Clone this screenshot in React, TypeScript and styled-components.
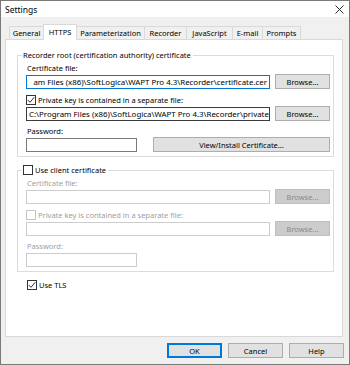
import styled, { createGlobalStyle } from "styled-components";

const GlobalStyle = createGlobalStyle`
  html, body {
    margin: 0;
    padding: 0;
    background: #ffffff;
  }
  body {
    font-family: "Noto Sans", "Open Sans", sans-serif;
    font-size: 7.5px;
    color: #000000;
  }
  * {
    box-sizing: border-box;
  }
`;

const tabs = [
  { label: "General", width: 35 },
  { label: "HTTPS", width: 34, active: true },
  { label: "Parameterization", width: 69 },
  { label: "Recorder", width: 43 },
  { label: "JavaScript", width: 47 },
  { label: "E-mail", width: 31 },
  { label: "Prompts", width: 39 },
];

function Check({ checked, disabled }: { checked?: boolean; disabled?: boolean }) {
  return (
    <CheckBox $disabled={disabled}>
      {checked && (
        <svg width="8" height="8" viewBox="0 0 8 8">
          <polyline points="0.8,4 3,6.3 7.3,1.2" fill="none" stroke="#333" strokeWidth="1" />
        </svg>
      )}
    </CheckBox>
  );
}

function App() {
  return (
    <Window>
      <GlobalStyle />
      <TitleBar>
        <Title>Settings</Title>
        <svg width="9" height="9" viewBox="0 0 9 9">
          <path d="M0.5 0.5 L8.5 8.5 M8.5 0.5 L0.5 8.5" stroke="#111" strokeWidth="0.9" />
        </svg>
      </TitleBar>
      <Body>
        <TabRow>
          {tabs.map((t) => (
            <Tab key={t.label} $width={t.width} $active={t.active}>
              {t.label}
            </Tab>
          ))}
        </TabRow>
        <Panel>
          <Group>
            <Legend>Recorder root (certification authority) certificate</Legend>
            <Label>Certificate file:</Label>
            <FieldRow>
              <TextField $border="#0078d7" $alignEnd>
                <span>am Files (x86)\SoftLogica\WAPT Pro 4.3\Recorder\certificate.cer</span>
              </TextField>
              <Button $width={55}>Browse...</Button>
            </FieldRow>
            <CheckRow>
              <Check checked />
              <span>Private key is contained in a separate file:</span>
            </CheckRow>
            <FieldRow>
              <TextField $border="#3c3c3c">
                <span>C:\Program Files (x86)\SoftLogica\WAPT Pro 4.3\Recorder\private</span>
              </TextField>
              <Button $width={55}>Browse...</Button>
            </FieldRow>
            <Label $gap={5}>Password:</Label>
            <FieldRow>
              <TextField $border="#7a7a7a" $width={111} />
              <Spacer />
              <Button $width={177}>View/Install Certificate...</Button>
            </FieldRow>
          </Group>

          <Group $top={7}>
            <Legend>
              <CheckRow as="span">
                <Check />
                <span>Use client certificate</span>
              </CheckRow>
            </Legend>
            <Label $disabled>Certificate file:</Label>
            <FieldRow>
              <TextField $border="#cccccc" />
              <Button $width={55} disabled>
                Browse...
              </Button>
            </FieldRow>
            <CheckRow $disabled>
              <Check disabled />
              <span>Private key is contained in a separate file:</span>
            </CheckRow>
            <FieldRow>
              <TextField $border="#cccccc" />
              <Button $width={55} disabled>
                Browse...
              </Button>
            </FieldRow>
            <Label $gap={5} $disabled>
              Password:
            </Label>
            <FieldRow>
              <TextField $border="#cccccc" $width={111} />
            </FieldRow>
          </Group>

          <TlsRow>
            <Check checked />
            <span>Use TLS</span>
          </TlsRow>
        </Panel>
        <ButtonBar>
          <Button $width={55} $default>
            OK
          </Button>
          <Button $width={55}>Cancel</Button>
          <Button $width={55}>Help</Button>
        </ButtonBar>
      </Body>
    </Window>
  );
}

export default App;

const Window = styled.div`
  width: 350px;
  height: 365px;
  border: 1px solid #7a7a7a;
  display: flex;
  flex-direction: column;
  background: #f0f0f0;
`;

const TitleBar = styled.div`
  height: 16px;
  background: #ffffff;
  display: flex;
  align-items: center;
  justify-content: space-between;
  padding: 0 5px 0 4px;
`;

const Title = styled.span`
  font-size: 8.5px;
`;

const Body = styled.div`
  flex: 1;
  padding: 7px 0 0 4px;
  display: flex;
  flex-direction: column;
`;

const TabRow = styled.div`
  display: flex;
  align-items: flex-end;
  height: 16px;
  padding-left: 4px;
  margin-bottom: -1px;
  position: relative;
  z-index: 1;
`;

const Tab = styled.div<{ $width: number; $active?: boolean }>`
  width: ${(p) => p.$width}px;
  height: ${(p) => (p.$active ? 16 : 14)}px;
  margin-left: -1px;
  border: 1px solid #d9d9d9;
  border-bottom: ${(p) => (p.$active ? "none" : "1px solid #d9d9d9")};
  background: ${(p) => (p.$active ? "#ffffff" : "#f0f0f0")};
  display: flex;
  align-items: center;
  justify-content: center;
  white-space: nowrap;
  padding-bottom: ${(p) => (p.$active ? 2 : 0)}px;
  &:first-child {
    margin-left: 0;
  }
`;

const Panel = styled.div`
  width: 338px;
  height: 298px;
  background: #ffffff;
  border: 1px solid #d9d9d9;
  padding: 9px 8px 0 11px;
  display: flex;
  flex-direction: column;
`;

const Group = styled.fieldset<{ $top?: number }>`
  margin: ${(p) => p.$top ?? 0}px 0 0 0;
  border: 1px solid #dcdcdc;
  padding: 2px 3px 4px 8px;
  min-width: 0;
`;

const Legend = styled.legend`
  height: 12px;
  line-height: 12px;
  padding: 0 2px 0 1px;
  margin-left: -4px;
  white-space: nowrap;
`;

const Label = styled.div<{ $gap?: number; $disabled?: boolean }>`
  height: 10px;
  line-height: 10px;
  margin-top: ${(p) => p.$gap ?? 0}px;
  padding-left: 1px;
  color: ${(p) => (p.$disabled ? "#a0a0a0" : "#000000")};
`;

const FieldRow = styled.div`
  display: flex;
  align-items: flex-start;
  gap: 5px;
  height: 15px;
  margin-top: 1px;
`;

const TextField = styled.div<{ $border: string; $width?: number; $alignEnd?: boolean }>`
  ${(p) => (p.$width ? `width: ${p.$width}px;` : "flex: 1;")}
  height: 14px;
  margin-top: 1px;
  border: 1px solid ${(p) => p.$border};
  background: #ffffff;
  display: flex;
  align-items: center;
  justify-content: ${(p) => (p.$alignEnd ? "flex-end" : "flex-start")};
  overflow: hidden;
  white-space: nowrap;
  padding: 0 2px;
  font-size: 7.9px;
`;

const Spacer = styled.div`
  flex: 1;
`;

const Button = styled.button<{ $width: number; $default?: boolean }>`
  width: ${(p) => p.$width}px;
  height: 15px;
  flex: none;
  padding: 0;
  font: inherit;
  color: #000000;
  background: #e1e1e1;
  border: 1px solid ${(p) => (p.$default ? "#0078d7" : "#adadad")};
  box-shadow: ${(p) => (p.$default ? "inset 0 0 0 1px #0078d7" : "none")};
  &:disabled {
    background: #cccccc;
    border-color: #bfbfbf;
    color: #8a8a8a;
  }
`;

const CheckRow = styled.div<{ $disabled?: boolean }>`
  display: flex;
  align-items: center;
  gap: 2px;
  height: 11px;
  margin-top: 5px;
  color: ${(p) => (p.$disabled ? "#a0a0a0" : "#000000")};
  span& {
    margin-top: 0;
    height: 12px;
  }
`;

const CheckBox = styled.span<{ $disabled?: boolean }>`
  width: 10px;
  height: 10px;
  flex: none;
  border: 1px solid ${(p) => (p.$disabled ? "#c4c4c4" : "#333333")};
  background: #ffffff;
  display: flex;
  align-items: center;
  justify-content: center;
`;

const TlsRow = styled.div`
  display: flex;
  align-items: center;
  gap: 2px;
  height: 11px;
  margin: 7px 0 0 10px;
`;

const ButtonBar = styled.div`
  display: flex;
  justify-content: flex-end;
  gap: 6px;
  padding-right: 5px;
  margin-top: 6px;
`;
